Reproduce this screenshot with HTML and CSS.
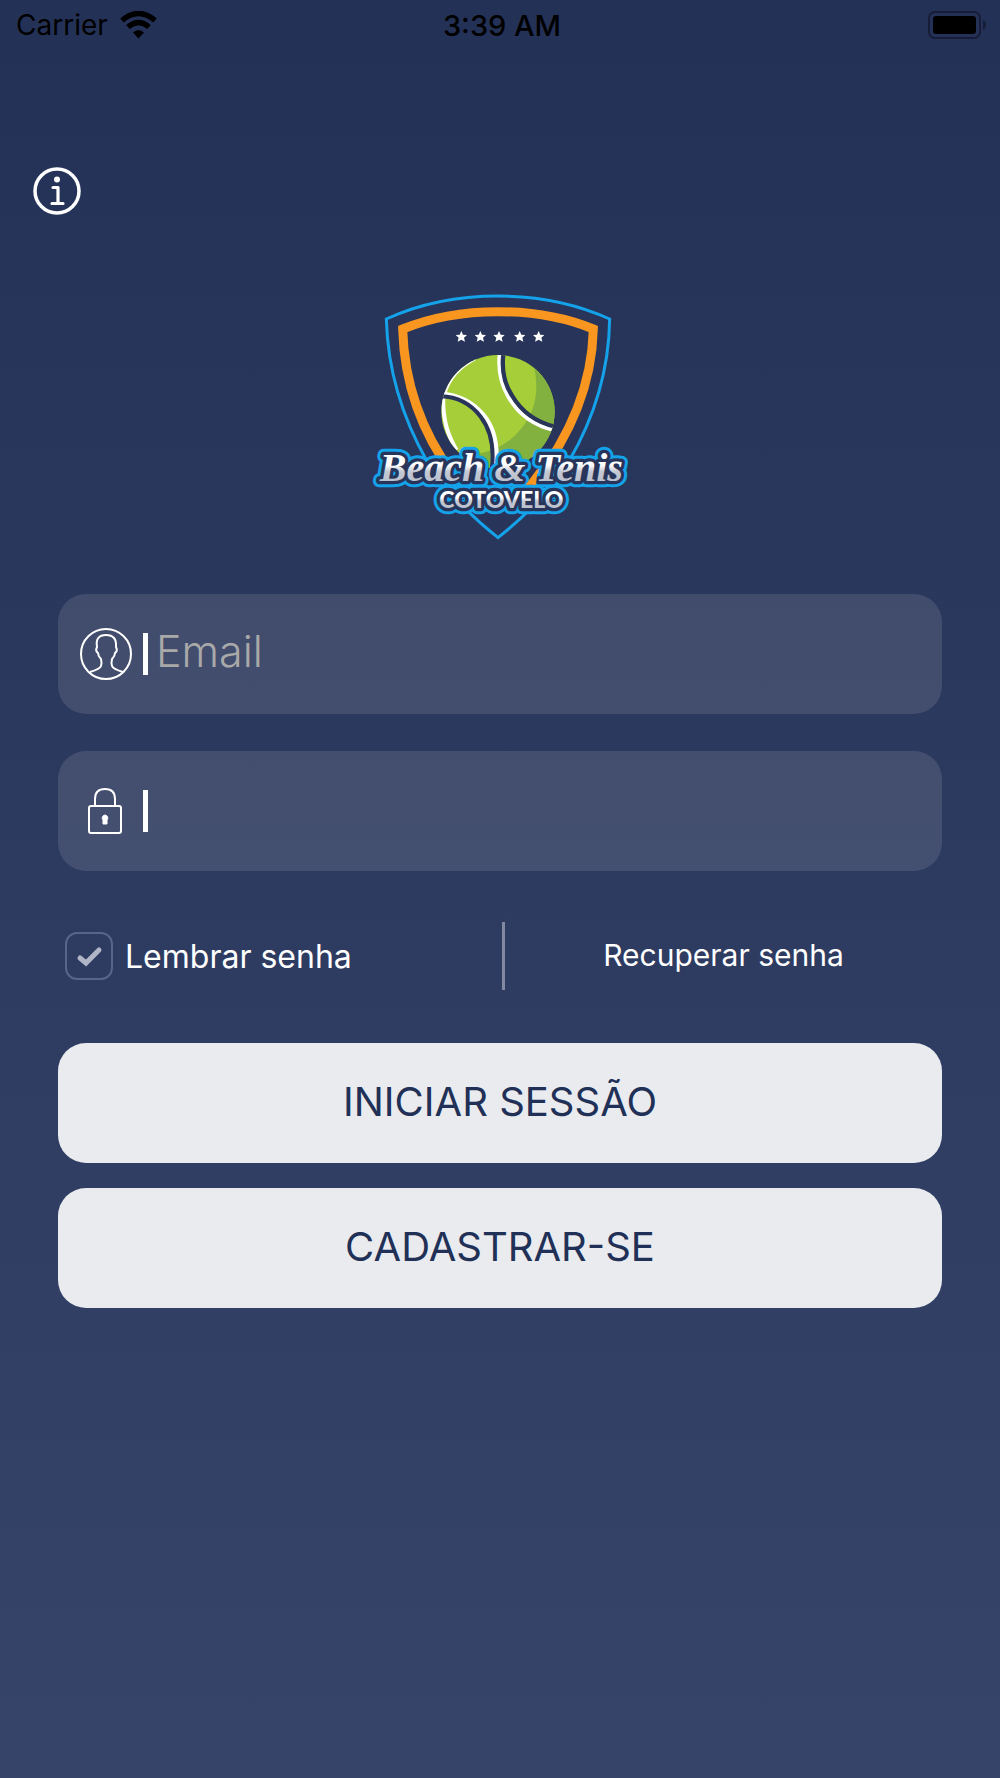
FILE: index.html
```html
<!DOCTYPE html>
<html lang="pt">
<head>
<meta charset="utf-8">
<meta name="viewport" content="width=device-width, initial-scale=1">
<title>Beach &amp; Tenis Cotovelo</title>
<link rel="stylesheet" href="styles.css">
</head>
<body>
<header class="status">
  <div class="status-carrier">
    <span>Carrier</span>
    <svg class="wifi" viewBox="0 0 37 28" aria-hidden="true">
      <path d="M2 9.500Q18.500-4.500 35 9.500" fill="none" stroke="#000" stroke-width="5.500"/>
      <path d="M8 16Q18.500 7 29 16" fill="none" stroke="#000" stroke-width="5.500"/>
      <path d="M13 21.500Q18.500 16.500 24 21.500L18.500 27.500Z"/>
    </svg>
  </div>
  <time class="status-time">3:39 AM</time>
  <svg class="battery" viewBox="0 0 60 28" aria-hidden="true">
    <rect x="1" y="1" width="51" height="26" rx="6" fill="none" stroke="#171d38" stroke-width="2"/>
    <rect x="5" y="5" width="43" height="18" rx="3"/>
    <path d="M55 9Q58 10 58 14T55 19Z" fill="#171d38"/>
  </svg>
</header>
<nav class="topbar">
  <button class="info" type="button" aria-label="Info">
    <svg viewBox="0 0 48 48" aria-hidden="true">
      <circle cx="24" cy="24" r="22" fill="none" stroke="#fff" stroke-width="3.500"/>
      <circle cx="24" cy="12.500" r="3" fill="#fff"/>
      <path d="M20 20.500H25V36.500M19 36.500H30" fill="none" stroke="#fff" stroke-width="3.200" stroke-linecap="round" stroke-linejoin="round"/>
    </svg>
  </button>
</nav>
<main class="login">
  <svg class="logo" viewBox="0 0 840 810" role="img" aria-label="Beach &amp; Tenis Cotovelo">
    <defs>
      <linearGradient id="silver" x1="0" y1="0" x2="0" y2="1">
        <stop offset=".45" stop-color="#fff"/><stop offset=".6" stop-color="#c3c8d3"/><stop offset="1" stop-color="#b4bac8"/>
      </linearGradient>
      <clipPath id="ball"><circle cx="414" cy="395" r="170"/></clipPath>
      <path id="star" d="M0-17L5-6 17-5 8 3 11 15 0 9-11 15-8 3-17-5-5-6Z"/>
      <text id="name" x="424" y="602" text-anchor="middle">Beach &amp; Tenis</text>
      <text id="place" x="424" y="683" text-anchor="middle">COTOVELO</text>
    </defs>
    <path d="M79 117Q230 48 414 48T749 117Q746 340 626 545Q550 665 414 773Q278 665 202 545Q85 340 79 117Z" fill="#283459" stroke="#14a3ea" stroke-width="9"/>
    <path d="M280 585Q135 390 128 147Q255 95 414 95T700 147Q694 390 518 613" fill="none" stroke="#f8961f" stroke-width="27"/>
    <g fill="#fff">
      <use href="#star" x="304" y="170"/><use href="#star" x="361" y="170"/><use href="#star" x="417" y="170"/><use href="#star" x="479" y="170"/><use href="#star" x="536" y="170"/>
    </g>
    <g clip-path="url(#ball)">
      <rect x="240" y="220" width="350" height="350" fill="#a6ce38"/>
      <path d="M520 250Q550 370 480 450Q430 510 350 522V570H600V250Z" fill="#83b13f"/>
      <path d="M345 235Q270 275 252 345M250 350Q246 440 290 510" fill="none" stroke="#fff" stroke-width="12"/>
      <path d="M240 341Q320 345 370 405Q420 465 406 570" fill="none" stroke="#fff" stroke-width="14"/>
      <path d="M240 349Q315 350 362 410Q408 470 395 570" fill="none" stroke="#283459" stroke-width="12"/>
      <path d="M420 215Q410 290 445 350Q490 430 585 451" fill="none" stroke="#fff" stroke-width="12"/>
      <path d="M431 215Q420 290 455 345Q500 422 590 441" fill="none" stroke="#283459" stroke-width="13"/>
    </g>
    <g class="logo-place cyan"><use href="#place"/></g>
    <g class="logo-name cyan"><use href="#name"/></g>
    <g class="logo-place navy"><use href="#place"/></g>
    <g class="logo-name navy"><use href="#name"/></g>
    <path d="M497 614L533 565 528 614Z" fill="#f8961f"/>
    <g class="logo-place" fill="url(#silver)"><use href="#place"/></g>
    <g class="logo-name" fill="url(#silver)"><use href="#name"/></g>
  </svg>
  <form class="form">
    <div class="field">
      <label class="field-icon" for="email" aria-label="Email">
        <svg viewBox="0 0 52 52" aria-hidden="true" fill="none" stroke="#fff" stroke-width="2">
          <circle cx="26" cy="26" r="25"/>
          <path d="M10 44Q20 41 21 38Q22 35 21 31Q18 28 18 25Q15 23 17 19Q15 7 26 7T36 19Q38 23 35 25Q35 28 32 31Q31 35 32 38Q33 41 43 44"/>
        </svg>
      </label>
      <span class="bar"></span>
      <input class="field-input" id="email" type="email" placeholder="Email">
    </div>
    <div class="field">
      <label class="field-icon" for="senha" aria-label="Senha">
        <svg viewBox="0 0 52 52" aria-hidden="true" fill="none" stroke="#fff" stroke-width="2">
          <rect x="9" y="21" width="32" height="27" rx="2"/>
          <path d="M15 21V14Q15 4 25 4T35 14V21"/>
          <path d="M25 30a3 3 0 0 1 2 5V39h-4v-4a3 3 0 0 1 2-5z" fill="#fff" stroke-width="1"/>
        </svg>
      </label>
      <span class="bar"></span>
      <input class="field-input" id="senha" type="password">
    </div>
    <div class="options">
      <label class="remember">
        <span class="check">
          <input type="checkbox" checked>
          <svg viewBox="0 0 48 48" aria-hidden="true"><path d="M15 26L21 31 34 18" fill="none" stroke="#b1b6c7" stroke-width="5" stroke-linecap="round"/></svg>
        </span>
        <span>Lembrar senha</span>
      </label>
      <div class="recover"><a href="#recuperar">Recuperar senha</a></div>
    </div>
    <div class="actions">
      <button class="action" type="submit">INICIAR SESSÃO</button>
      <button class="action" type="button">CADASTRAR-SE</button>
    </div>
  </form>
</main>
</body>
</html>
```

FILE: styles.css
```css
* {
  box-sizing: border-box;
}

html {
  min-height: 100%;
  background: linear-gradient(#243156, #2e3b60 50%, #36446a);
}

body {
  margin: 0;
  font-family: Inter, "Noto Sans", sans-serif;
  color: #fff;
}

button {
  border: 0;
  padding: 0;
  font: inherit;
}

svg {
  display: block;
}

.status {
  display: grid;
  grid-template-columns: 1fr auto 1fr;
  align-items: center;
  height: 50px;
  padding: 0 12px 0 16px;
  font-size: 28px;
  color: #000;
}

.status-carrier {
  display: flex;
  align-items: center;
  gap: 12px;
}

.wifi {
  width: 37px;
  height: 28px;
}

.status-time {
  font-size: 29px;
  font-weight: 500;
}

.battery {
  width: 60px;
  height: 28px;
  justify-self: end;
}

.topbar {
  padding: 117px 33px 0;
}

.info {
  display: block;
  width: 48px;
  height: 48px;
  background: none;
}

.login {
  padding: 65px 58px 0;
}

.logo {
  width: 280px;
  height: 270px;
  margin: 0 auto;
}

.logo-name {
  font: italic bold 120px "Liberation Serif", serif;
}

.logo-place {
  font: 900 69px Lato, sans-serif;
}

.cyan {
  fill: #14a3ea;
  stroke: #14a3ea;
  stroke-width: 38px;
  stroke-linejoin: round;
}

.navy {
  fill: #283459;
  stroke: #283459;
  stroke-width: 20px;
  stroke-linejoin: round;
}

.form {
  display: grid;
  gap: 37px;
  padding-top: 44px;
}

.field {
  display: flex;
  align-items: center;
  height: 120px;
  padding: 0 22px;
  border-radius: 28px;
  background: rgba(255, 255, 255, .11);
}

.field-icon {
  width: 52px;
  height: 52px;
}

.bar {
  width: 5px;
  height: 42px;
  margin: 0 8px 0 11px;
  background: #fff;
}

.field-input {
  flex: 1;
  min-width: 0;
  height: 60px;
  border: 0;
  padding: 0 0 6px;
  outline: 0;
  background: none;
  font: 300 43px Inter, sans-serif;
  color: #fff;
}

.field-input::placeholder {
  color: #a9a9a9;
  opacity: 1;
}

.options {
  display: grid;
  grid-template-columns: 1fr 1fr;
  align-items: center;
  padding: 14px 0 16px;
}

.remember {
  display: flex;
  align-items: center;
  gap: 12px;
  padding-left: 7px;
  font-size: 32px;
}

.check {
  display: grid;
  width: 48px;
  height: 48px;
}

.check input,
.check svg {
  grid-area: 1 / 1;
  width: 48px;
  height: 48px;
  margin: 0;
}

.check input {
  appearance: none;
  border: 2px solid #59648a;
  border-radius: 12px;
}

.check svg {
  pointer-events: none;
}

.recover {
  display: grid;
  place-items: center;
  height: 68px;
  margin-left: 2px;
  padding-bottom: 2px;
  border-left: 3px solid #81889f;
  font-size: 30px;
}

.recover a {
  color: #fff;
  text-decoration: none;
}

.actions {
  display: grid;
  gap: 25px;
}

.action {
  height: 120px;
  padding-bottom: 4px;
  border-radius: 28px;
  background: #e9ebef;
  color: #213056;
  font-size: 40px;
}
```
